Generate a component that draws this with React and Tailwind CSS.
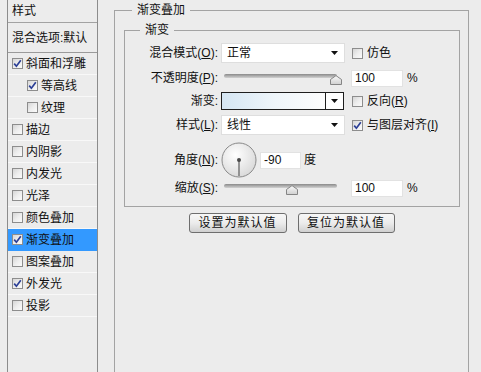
import React from "react";

function Check({ checked }) {
  return (
    <span className="inline-flex w-[11px] h-[11px] shrink-0 items-center justify-center border border-[#8d8d8d] bg-linear-to-br from-[#d6d6d6] via-[#ededed] to-[#fbfbfb]">
      {checked && (
        <svg width="9" height="9" viewBox="0 0 9 9">
          <path d="M1.2 4.6 L3.4 7.2 L7.8 1.3" stroke="#2c3f96" strokeWidth="1.7" fill="none" />
        </svg>
      )}
    </span>
  );
}

function Arrow() {
  return (
    <svg width="7" height="4" viewBox="0 0 7 4">
      <path d="M0 0H7L3.5 4Z" fill="#111" />
    </svg>
  );
}

function Select({ value }) {
  return (
    <div className="ml-[3px] w-[124px] h-[20px] bg-white border border-[#dedede] flex items-center justify-between pl-[5px] pr-[6px]">
      <span>{value}</span>
      <Arrow />
    </div>
  );
}

function Slider({ thumb }) {
  return (
    <div className="relative ml-[3px] w-[124px] h-[20px]">
      <div className="absolute left-[3px] top-[6px] w-[113px] h-[4px] rounded-full bg-linear-to-b from-[#8a8a8a] to-[#d2d2d2]" />
      <svg className={"absolute top-[7px] " + thumb} width="12" height="10" viewBox="0 0 12 10">
        <defs>
          <linearGradient id="tg" x1="0" y1="0" x2="0" y2="1">
            <stop offset="0" stopColor="#fafafa" />
            <stop offset="1" stopColor="#d0d0d0" />
          </linearGradient>
        </defs>
        <path d="M0.5 9.5 V4.5 L6 0.6 L11.5 4.5 V9.5 Z" fill="url(#tg)" stroke="#858585" />
      </svg>
    </div>
  );
}

function Field({ value, w }) {
  return (
    <div className={"h-[17px] bg-white border border-[#e2e2e2] flex items-center pl-[3px] " + w}>
      {value}
    </div>
  );
}

function Label({ children }) {
  return <div className="w-[93px] shrink-0 text-right whitespace-nowrap">{children}</div>;
}

function U({ children }) {
  return <span className="underline underline-offset-1">{children}</span>;
}

function CheckText({ checked, children }) {
  return (
    <div className="flex items-center gap-[4px] whitespace-nowrap">
      <Check checked={checked} />
      <span>{children}</span>
    </div>
  );
}

const leftRows = [
  { t: "斜面和浮雕", c: true, i: false },
  { t: "等高线", c: true, i: true },
  { t: "纹理", c: false, i: true },
  { t: "描边", c: false, i: false },
  { t: "内阴影", c: false, i: false },
  { t: "内发光", c: false, i: false },
  { t: "光泽", c: false, i: false },
  { t: "颜色叠加", c: false, i: false },
  { t: "渐变叠加", c: true, i: false, sel: true },
  { t: "图案叠加", c: false, i: false },
  { t: "外发光", c: true, i: false },
  { t: "投影", c: false, i: false },
];

export default function App() {
  return (
    <div className="w-[481px] h-[372px] overflow-hidden bg-[#ececec] flex text-[12px] leading-[14px] text-[#111] font-['Liberation_Sans','Noto_Sans_CJK_SC',sans-serif]">
      {/* left list */}
      <div className="ml-[7px] w-[91px] shrink-0 h-full border-x border-[#8c8c8c]">
        <div className="h-[23px] border-b border-[#a2a2a2] flex items-center pl-[4px]">样式</div>
        <div className="h-[30px] border-b border-[#9a9a9a] flex items-center pl-[4px] whitespace-nowrap overflow-hidden">
          混合选项:默认
        </div>
        {leftRows.map((r) => (
          <div
            key={r.t}
            className={
              "h-[22px] border-b flex items-center gap-[3px] whitespace-nowrap " +
              (r.i ? "pl-[19px] " : "pl-[4px] ") +
              (r.sel ? "bg-[#3399ff] border-[#3399ff]" : "border-[#f8f8f8]")
            }
          >
            <Check checked={r.c} />
            <span>{r.t}</span>
          </div>
        ))}
      </div>

      {/* right */}
      <fieldset className="ml-[16px] w-[355px] shrink-0 h-[420px] border border-[#a3a3a3]">
        <legend className="ml-[17px] px-[5px] leading-[20px]">渐变叠加</legend>
        <fieldset className="ml-[9px] mr-[8px] border border-[#a3a3a3] pb-[8px]">
          <legend className="ml-[15px] px-[5px] leading-[20px]">渐变</legend>
          {/* row 1 */}
          <div className="flex items-center h-[20px] mt-[3px]">
            <Label>混合模式(<U>O</U>):</Label>
            <Select value="正常" />
            <div className="ml-[7px]">
              <CheckText checked={false}>仿色</CheckText>
            </div>
          </div>
          {/* row 2 */}
          <div className="flex items-center h-[20px] mt-[5px]">
            <Label>不透明度(<U>P</U>):</Label>
            <Slider thumb="left-[109px]" />
            <div className="ml-[6px]">
              <Field value="100" w="w-[52px]" />
            </div>
            <span className="ml-[4px]">%</span>
          </div>
          {/* row 3 */}
          <div className="flex items-center h-[20px] mt-[3px]">
            <Label>渐变:</Label>
            <div className="ml-[3px] w-[123px] h-[18px] border border-[#1e1e1e] flex">
              <div className="flex-1 bg-linear-to-r from-[#d5e6f3] via-[#eef5fa] to-[#fdfdfd]" />
              <div className="w-[18px] border-l border-[#1e1e1e] bg-white flex items-center justify-center">
                <Arrow />
              </div>
            </div>
            <div className="ml-[8px]">
              <CheckText checked={false}>
                反向(<U>R</U>)
              </CheckText>
            </div>
          </div>
          {/* row 4 */}
          <div className="flex items-center h-[20px] mt-[4px]">
            <Label>样式(<U>L</U>):</Label>
            <Select value="线性" />
            <div className="ml-[7px]">
              <CheckText checked={true}>
                与图层对齐(<U>I</U>)
              </CheckText>
            </div>
          </div>
          {/* row 5 */}
          <div className="flex items-center h-[36px] mt-[7px]">
            <Label>角度(<U>N</U>):</Label>
            <svg className="ml-[3px]" width="36" height="36" viewBox="0 0 36 36">
              <defs>
                <radialGradient id="dg" cx="0.4" cy="0.35" r="0.7">
                  <stop offset="0" stopColor="#ffffff" />
                  <stop offset="1" stopColor="#d8d8d8" />
                </radialGradient>
              </defs>
              <circle cx="18" cy="18" r="17" fill="url(#dg)" stroke="#8a8a8a" />
              <line x1="18" y1="18" x2="18" y2="34" stroke="#6f6f6f" strokeWidth="1.4" />
              <circle cx="18" cy="18" r="2" fill="#4a4a4a" />
            </svg>
            <div className="ml-[3px]">
              <Field value="-90" w="w-[41px]" />
            </div>
            <span className="ml-[3px]">度</span>
          </div>
          {/* row 6 */}
          <div className="flex items-center h-[20px]">
            <Label>缩放(<U>S</U>):</Label>
            <Slider thumb="left-[65px]" />
            <div className="ml-[6px]">
              <Field value="100" w="w-[52px]" />
            </div>
            <span className="ml-[4px]">%</span>
          </div>
        </fieldset>
        <div className="flex justify-center gap-[11px] mt-[6px]">
          <button className="w-[98px] h-[20px] rounded-[3px] border border-[#6e6e6e] bg-linear-to-b from-[#f7f7f7] via-[#ececec] to-[#d0d0d0] tracking-[1px]">
            设置为默认值
          </button>
          <button className="w-[97px] h-[20px] rounded-[3px] border border-[#6e6e6e] bg-linear-to-b from-[#f7f7f7] via-[#ececec] to-[#d0d0d0] tracking-[1px]">
            复位为默认值
          </button>
        </div>
      </fieldset>
    </div>
  );
}
